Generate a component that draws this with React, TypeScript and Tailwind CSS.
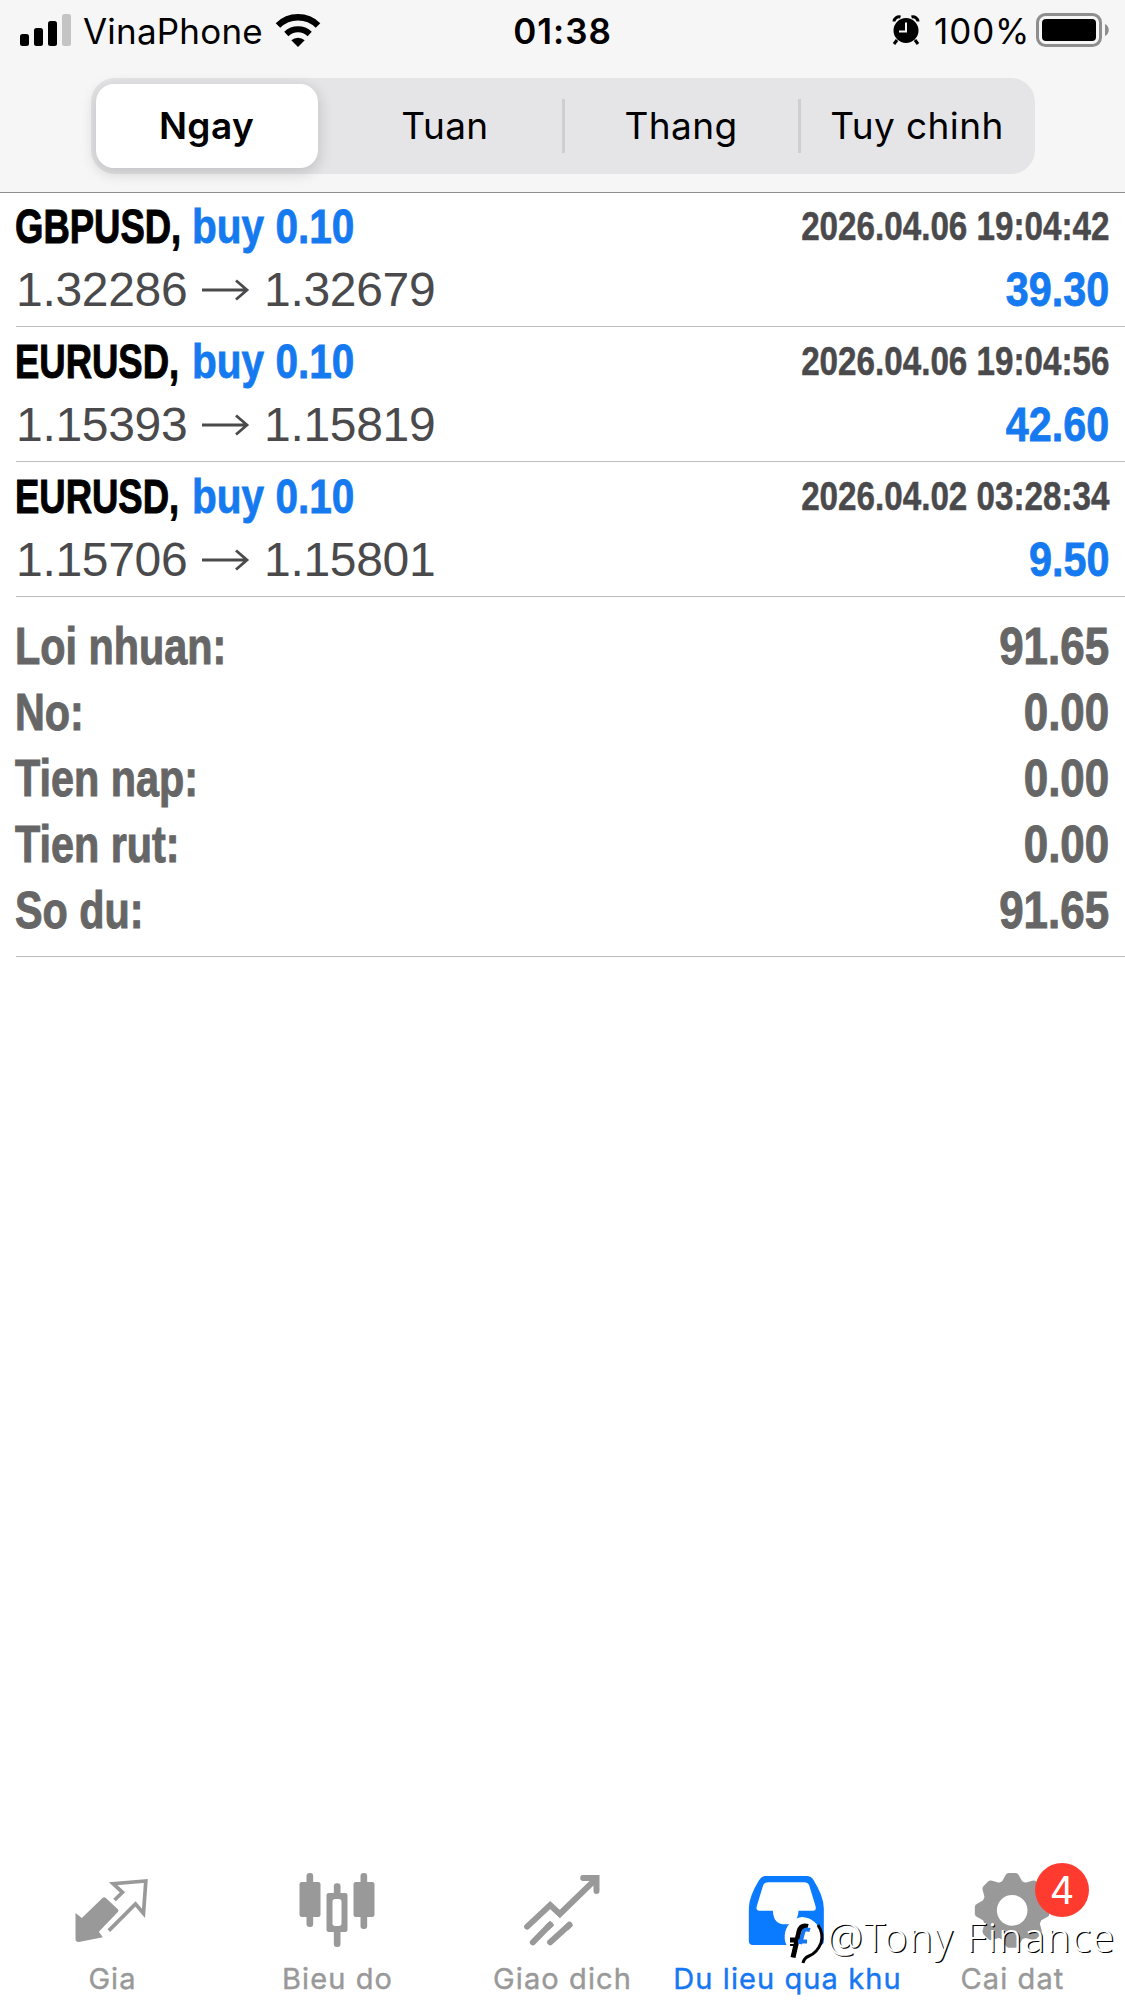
import type { ReactNode } from 'react';

const segments = ['Ngay', 'Tuan', 'Thang', 'Tuy chinh'];

const deals = [
  { symbol: 'GBPUSD,', side: 'buy 0.10', open: '1.32286', close: '1.32679', time: '2026.04.06 19:04:42', profit: '39.30' },
  { symbol: 'EURUSD,', side: 'buy 0.10', open: '1.15393', close: '1.15819', time: '2026.04.06 19:04:56', profit: '42.60' },
  { symbol: 'EURUSD,', side: 'buy 0.10', open: '1.15706', close: '1.15801', time: '2026.04.02 03:28:34', profit: '9.50' },
];

const summary = [
  { label: 'Loi nhuan:', value: '91.65' },
  { label: 'No:', value: '0.00' },
  { label: 'Tien nap:', value: '0.00' },
  { label: 'Tien rut:', value: '0.00' },
  { label: 'So du:', value: '91.65' },
];

function StatusBar() {
  return (
    <div className="flex h-[60px] items-center px-5">
      <div className="flex flex-1 items-center">
        <svg className="h-8 w-[51px]" viewBox="0 0 51 32">
          <rect x="0" y="20" width="9" height="12" rx="2.5" />
          <rect x="14" y="14" width="9" height="18" rx="2.5" />
          <rect x="28" y="7" width="9" height="25" rx="2.5" />
          <rect x="42" y="0" width="9" height="32" rx="2.5" fill="#c4c4c4" />
        </svg>
        <span className="ml-[12px] w-[192px] pt-[2px] text-[35px] leading-[60px] tracking-[0.2px]">VinaPhone</span>
        <svg className="h-[33px] w-[46px]" viewBox="0 0 46 33">
          <path d="M3 11.5a28.5 28.5 0 0 1 40 0" fill="none" stroke="#000" strokeWidth="6.5" />
          <path d="M11.3 20a17 17 0 0 1 23.4 0" fill="none" stroke="#000" strokeWidth="6" />
          <path d="M16.3 26.3a9.8 9.8 0 0 1 13.4 0L23 33z" />
        </svg>
      </div>
      <span className="pt-[2px] text-[35px] font-semibold leading-[60px] tracking-[1px]">01:38</span>
      <div className="flex flex-1 items-center justify-end">
        <svg className="h-[30px] w-[28px]" viewBox="0 0 28 30">
          <circle cx="14" cy="15.5" r="12.5" />
          <path d="M2 6.5A5 5 0 0 1 8.5 2M26 6.5A5 5 0 0 0 19.5 2M5 25l-3 4M23 25l3 4" stroke="#000" strokeWidth="3" fill="none" />
          <path d="M14 7.5V16.5H7" stroke="#f6f6f6" strokeWidth="2" fill="none" />
        </svg>
        <span className="ml-[14px] w-[102px] whitespace-nowrap pt-[2px] text-[35px] leading-[60px] tracking-[0.9px]">100%</span>
        <svg className="-mr-[4px] h-[34px] w-[73px]" viewBox="0 0 73 34">
          <rect x="1.5" y="1.5" width="63" height="31" rx="8" fill="none" stroke="#8e8e8e" strokeWidth="3" />
          <rect x="6" y="6" width="54" height="22" rx="4" />
          <path d="M69 11c5 2 5 10 0 12z" fill="#8e8e8e" />
        </svg>
      </div>
    </div>
  );
}

function SegmentedControl() {
  return (
    <div className="mx-auto mt-[18px] flex h-24 w-[944px] rounded-[24px] bg-[#e5e5e7] text-[37px] tracking-[0.4px]">
      {segments.map((name, index) => (
        <div key={name} className="flex flex-1 items-center">
          {index === 0 ? (
            <div className="ml-[5px] flex h-[84px] w-[222px] items-center justify-center rounded-[18px] bg-white font-semibold shadow-[0_4px_14px_2px_rgba(0,0,0,0.14)]">
              {name}
            </div>
          ) : (
            <>
              <div className={index === 1 ? '-ml-px h-[54px] w-[3px]' : '-ml-px h-[54px] w-[3px] bg-[#cfcfd2]'} />
              <span className="mr-px flex-1 text-center">{name}</span>
            </>
          )}
        </div>
      ))}
    </div>
  );
}

function DealRow({ deal }: { deal: (typeof deals)[number] }) {
  return (
    <div className="ml-4 h-[135px] border-b border-[#bcbcbe] pr-4 pt-[2px] font-['Liberation_Sans'] text-[48px]">
      <div className="flex h-[66px] items-center justify-between font-bold">
        <div className="-ml-px flex">
          <span className="w-[177px] origin-left scale-x-[0.76] whitespace-nowrap [-webkit-text-stroke:1px]">{deal.symbol}</span>
          <span className="origin-left scale-x-[0.845] whitespace-nowrap text-[#157af0] [-webkit-text-stroke:0.8px]">{deal.side}</span>
        </div>
        <span className="origin-right scale-x-[0.83] pb-[2px] text-[40px] text-[#4a4a4c] [-webkit-text-stroke:0.5px]">{deal.time}</span>
      </div>
      <div className="flex h-[60px] items-center justify-between">
        <div className="flex items-center text-[#4a4a4c]">
          <span className="w-[186px] tracking-[-0.3px]">{deal.open}</span>
          <svg className="mr-[14px] h-[22px] w-[48px]" viewBox="0 0 48 22">
            <path d="M0 11H45M34 1.5L45 11L34 20.5" fill="none" stroke="#4a4a4c" strokeWidth="2.8" />
          </svg>
          <span className="tracking-[-0.3px]">{deal.close}</span>
        </div>
        <span className="origin-right scale-x-[0.86] font-bold text-[#157af0] [-webkit-text-stroke:0.8px]">{deal.profit}</span>
      </div>
    </div>
  );
}

function Tab({ label, active, children }: { label: string; active?: boolean; children: ReactNode }) {
  return (
    <div className={active ? 'relative flex w-[225px] flex-col items-center text-[#1677f2]' : 'relative flex w-[225px] flex-col items-center text-[#999]'}>
      {children}
      <span className="ml-[2px] mt-[9px] whitespace-nowrap text-[29px] leading-[40px] tracking-[1.1px] [-webkit-text-stroke:0.4px]">{label}</span>
    </div>
  );
}

function TabBar() {
  return (
    <div className="relative -left-px flex h-[141px]">
      <Tab label="Gia">
        <svg className="size-[90px]" viewBox="82.5 30 270 270" fill="currentColor">
          <path d="M189 144q5-4 10 0l36 34q4 4 0 8l-57 59 12 17-72 14q-10 0-10-8v-79l19 15z" />
          <path d="M225 150l24-23-28-26 98-8-7 97-24-28-80 80" fill="none" stroke="currentColor" strokeWidth="11" />
        </svg>
      </Tab>
      <Tab label="Bieu do">
        <svg className="size-[90px]" viewBox="757.5 30 270 270" fill="currentColor">
          <rect x="780" y="96" width="63" height="105" rx="7" />
          <rect x="801" y="69" width="20" height="162" rx="9" />
          <rect x="861" y="129" width="63" height="117" rx="7" />
          <rect x="883" y="100" width="20" height="191" rx="9" />
          <rect x="879" y="147" width="27" height="81" rx="8" fill="#fff" />
          <rect x="942" y="96" width="63" height="105" rx="7" />
          <rect x="963" y="69" width="20" height="168" rx="9" />
        </svg>
      </Tab>
      <Tab label="Giao dich">
        <svg className="size-[90px]" viewBox="172.5 30 270 270" fill="none" stroke="currentColor" strokeWidth="18" strokeLinecap="round">
          <path d="M203 230L272 165L301 192L408 88M371 84H411V123" />
          <path d="M220 277L272 224M272 277L330 224" />
          <path d="M262 234L278 219M320 234L334 221" strokeLinecap="butt" />
        </svg>
      </Tab>
      <Tab label="Du lieu qua khu" active>
        <svg className="size-[90px]" viewBox="37.5 30 270 270" fill="#0a7aff" fillRule="evenodd">
          <path d="M108 78H232Q245 78 252 90Q283 140 283 175V273Q283 285 271 285H70Q58 285 58 273V175Q58 140 89 90Q96 78 108 78zM116 97Q105 97 101 106L82 168Q78 182 90 182H130C132 210 142 223 168 223C194 223 205 210 207 182H250Q262 182 258 168L239 106Q235 97 224 97z" />
        </svg>
      </Tab>
      <Tab label="Cai dat">
        <svg className="size-[90px]" viewBox="712.5 30 270 270" fill="currentColor">
          <circle cx="848" cy="181" r="69" fill="none" stroke="currentColor" strokeWidth="46" />
          {[0, 45, 90, 135, 180, 225, 270, 315].map((angle) => (
            <path key={angle} d="M812 104L828 76Q831 69 838 69H858Q865 69 868 76L884 104z" transform={`rotate(${angle} 848 181)`} />
          ))}
        </svg>
        <div className="absolute left-[136px] top-[3px] flex size-[54px] items-center justify-center rounded-full bg-[#ff3b30] text-[38px] leading-none text-white">
          4
        </div>
      </Tab>
      {/* watermark floats over the last two tabs */}
      <div className="absolute left-[781px] top-[57px] flex items-start">
        <svg className="h-[50px] w-[47px]" viewBox="0 0 47 50">
          <path d="M22 0a20 20 0 0 1 8 38l-8 8-3-7A20 20 0 0 1 22 0z" fill="#fff" />
          <path d="M38 8q6 9 3 18-4 10-12 13-5 2-6 7" fill="none" stroke="#000" strokeWidth="3" />
          <path d="M28 9.5q-7-2-9 5l-3 13-3 13M10 23h10" fill="none" stroke="#000" strokeWidth="5" />
          <path d="M30 13q-6-2-7 3l-3 11M18 24.5h9" fill="none" stroke="#1677f2" strokeWidth="4" />
          <path d="M10 28l5 0-3 12" fill="none" stroke="#000" strokeWidth="2" />
        </svg>
        <span className="whitespace-nowrap font-['Noto_Sans'] text-[40px] font-light leading-[40px] tracking-[1.4px] text-white [text-shadow:1.2px_1px_0_#000]">@Tony Finance</span>
      </div>
    </div>
  );
}

export default function App() {
  return (
    <div className="flex h-[2001px] w-[1125px] flex-col overflow-hidden bg-white font-['Inter',sans-serif] text-black">
      <header className="h-[193px] border-b border-[#8f8f91] bg-[#f6f6f6]">
        <StatusBar />
        <SegmentedControl />
      </header>
      <main className="-mt-px flex-1">
        {deals.map((deal) => (
          <DealRow key={deal.time} deal={deal} />
        ))}
        <div className="ml-4 h-[360px] border-b border-[#bcbcbe] pr-4 pt-[16px] font-['Liberation_Sans'] text-[52px] font-bold text-[#666] [-webkit-text-stroke:1px]">
          {summary.map((row) => (
            <div key={row.label} className="-ml-px flex h-[66px] items-center justify-between">
              <span className="origin-left scale-x-[0.795]">{row.label}</span>
              <span className="origin-right scale-x-[0.845]">{row.value}</span>
            </div>
          ))}
        </div>
      </main>
      <TabBar />
    </div>
  );
}
